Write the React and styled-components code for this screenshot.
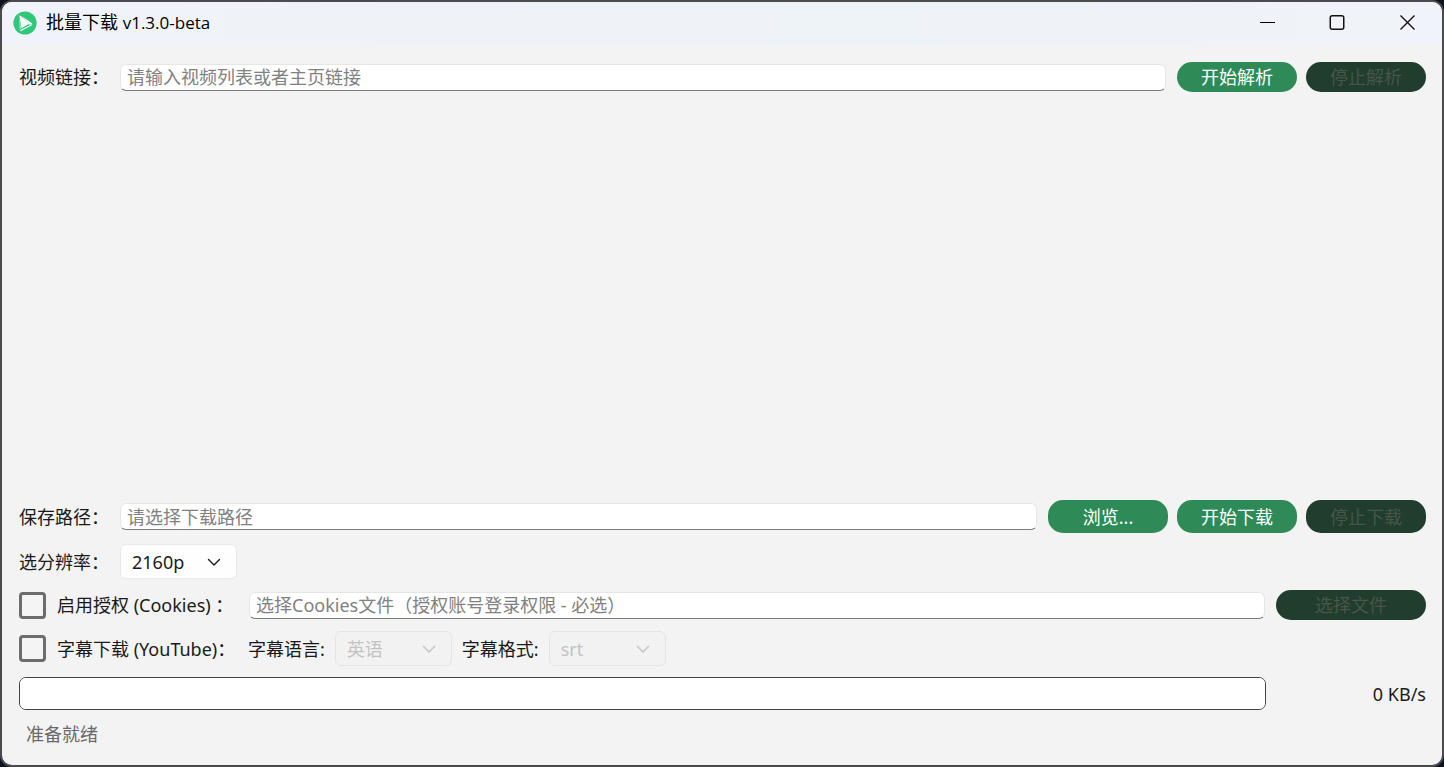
import React from "react";
import styled, { createGlobalStyle } from "styled-components";

const GlobalStyle = createGlobalStyle`
  *, *::before, *::after { box-sizing: border-box; }
  body {
    margin: 0;
    background: #0d121c;
    color: #1a1a1a;
    font: 18px/26px "Noto Sans", "Noto Sans CJK SC", sans-serif;
  }
  input, select, button { font: inherit; color: inherit; margin: 0; }
`;

const Window = styled.div`
  display: flex;
  flex-direction: column;
  min-height: 100vh;
  background: #f3f3f3;
  border: 2px solid #4b4b4e;
  border-radius: 12px;
  overflow: hidden;
`;

const TitleBar = styled.header`
  display: flex;
  align-items: center;
  height: 43px;
  padding: 0 0 2px 11px;
  background: linear-gradient(90deg, #f0f3f9, #eef3f8 60%, #f0f3f9);
`;

const Logo = styled.svg`
  width: 24px;
  height: 24px;
  margin-right: 9px;
  flex: none;
`;

const Title = styled.h1`
  flex: 1;
  margin: 0;
  font-size: 18px;
  font-weight: 400;
  color: #000;
`;

const Version = styled.span`
  font-family: "Open Sans", sans-serif;
  font-size: 17px;
`;

const CaptionButton = styled.button`
  display: grid;
  place-items: center;
  width: 70px;
  height: 41px;
  padding: 0;
  border: 0;
  background: none;
  svg { display: block; }
`;

const Content = styled.main`
  flex: 1;
  display: flex;
  flex-direction: column;
  gap: 11px;
  padding: 17px 16px 18px 17px;
`;

const Row = styled.div`
  display: flex;
  align-items: center;
  gap: 11px;
`;

const FieldLabel = styled.label`
  flex: none;
  width: 90px;
  white-space: nowrap;
`;

const TextField = styled.input`
  flex: 1;
  min-width: 0;
  height: 27px;
  padding: 0 6px;
  line-height: 24px;
  background: #fff;
  border: 1px solid #e6e6e6;
  border-bottom-color: #7c7c7c;
  border-radius: 6px;
  outline: none;
  &::placeholder { color: #818181; opacity: 1; }
`;

const ButtonGroup = styled.div`
  display: flex;
  gap: 9px;
`;

const PillButton = styled.button`
  width: ${(p) => (p.$wide ? 150 : 120)}px;
  height: ${(p) => (p.$tall ? 33 : 30)}px;
  padding: 0;
  border: 0;
  border-radius: 15px;
  background: #2e8b57;
  color: #fff;
  &:disabled { background: #203d2d; color: #475649; }
`;

const ResultArea = styled.section`
  flex: 1;
`;

const SelectBox = styled.div`
  position: relative;
  width: 117px;
  height: 35px;
  flex: none;
  color: ${(p) => (p.$disabled ? "#c3c3c3" : "#1a1a1a")};
`;

const Select = styled.select`
  appearance: none;
  width: 100%;
  height: 100%;
  padding: 0 36px 0 11px;
  background: #fefefe;
  border: 1px solid #e9e9e9;
  border-radius: 6px;
  &:disabled { background: #f2f2f2; border-color: #e5e5e5; opacity: 1; }
`;

const Chevron = styled.svg`
  position: absolute;
  right: 16px;
  top: 12px;
  width: 14px;
  height: 12px;
  pointer-events: none;
`;

const CheckLabel = styled.label`
  display: flex;
  align-items: center;
  gap: 11px;
  flex: none;
  width: 219px;
  white-space: nowrap;
`;

const Checkbox = styled.input`
  appearance: none;
  width: 27px;
  height: 27px;
  flex: none;
  border: 3px solid #6c6c6c;
  border-radius: 4px;
  background: #f4f4f4;
`;

const SubtitleOptions = styled.div`
  display: flex;
  align-items: center;
  gap: 10px;
`;

const Progress = styled.progress`
  appearance: none;
  flex: 1;
  min-width: 0;
  height: 33px;
  border: 1px solid #444;
  border-radius: 7px;
  background: #fff;
  overflow: hidden;
  &::-webkit-progress-bar { background: #fff; }
  &::-webkit-progress-value { background: #2e8b57; }
`;

const Speed = styled.output`
  width: 149px;
  text-align: right;
`;

const Status = styled.footer`
  padding-left: 7px;
  color: #6a6a6a;
`;

function Dropdown({ id, disabled, children }) {
  return (
    <SelectBox $disabled={disabled}>
      <Select id={id} disabled={disabled}>{children}</Select>
      <Chevron viewBox="0 0 14 12" fill="none" stroke="currentColor" strokeWidth="1.4" strokeLinecap="round" strokeLinejoin="round" aria-hidden="true">
        <path d="M1.5 3.5 7 9l5.500-5.500" />
      </Chevron>
    </SelectBox>
  );
}

export default function App() {
  return (
    <>
      <GlobalStyle />
      <Window lang="zh-CN">
        <TitleBar>
          <Logo viewBox="0 0 24 24" aria-hidden="true">
            <circle cx="12" cy="12" r="11.600" fill="#30c77b" />
            <path d="M6.300 4.300 9.500 6.300 15.800 13 8.600 17.200z" fill="#fff" />
            <path d="M9.500 5.800 19.400 12.500 16.700 13.900z" fill="#fff" />
            <path d="M7.200 18.900 19.500 12.900 18.600 14.500 7.600 20.200z" fill="#fff" />
            <path d="M6 4.800 6.700 18.200 8.100 17.500z" fill="#b4ecd0" />
          </Logo>
          <Title>批量下载 <Version>v1.3.0-beta</Version></Title>
          <CaptionButton aria-label="最小化">
            <svg width="17" height="17" viewBox="0 0 17 17"><path d="M1 8.500h15" stroke="#000" /></svg>
          </CaptionButton>
          <CaptionButton aria-label="最大化">
            <svg width="17" height="17" viewBox="0 0 17 17"><rect x="1.250" y="1.750" width="13.500" height="13.500" rx="2" fill="none" stroke="#111" strokeWidth="1.500" /></svg>
          </CaptionButton>
          <CaptionButton aria-label="关闭">
            <svg width="17" height="17" viewBox="0 0 17 17"><path d="M1.500 1.500l14 14M15.500 1.500l-14 14" stroke="#111" strokeWidth="1.400" /></svg>
          </CaptionButton>
        </TitleBar>
        <Content>
          <Row>
            <FieldLabel htmlFor="url">视频链接：</FieldLabel>
            <TextField id="url" placeholder="请输入视频列表或者主页链接" />
            <ButtonGroup>
              <PillButton>开始解析</PillButton>
              <PillButton disabled>停止解析</PillButton>
            </ButtonGroup>
          </Row>
          <ResultArea />
          <Row>
            <FieldLabel htmlFor="path">保存路径：</FieldLabel>
            <TextField id="path" placeholder="请选择下载路径" />
            <ButtonGroup>
              <PillButton $tall>浏览...</PillButton>
              <PillButton $tall>开始下载</PillButton>
              <PillButton $tall disabled>停止下载</PillButton>
            </ButtonGroup>
          </Row>
          <Row>
            <FieldLabel htmlFor="resolution">选分辨率：</FieldLabel>
            <Dropdown id="resolution"><option>2160p</option></Dropdown>
          </Row>
          <Row>
            <CheckLabel><Checkbox type="checkbox" />启用授权 (Cookies) ：</CheckLabel>
            <TextField aria-label="Cookies文件" placeholder="选择Cookies文件（授权账号登录权限 - 必选）" />
            <PillButton $wide disabled>选择文件</PillButton>
          </Row>
          <SubtitleOptions>
            <CheckLabel><Checkbox type="checkbox" />字幕下载 (YouTube)：</CheckLabel>
            <label htmlFor="language">字幕语言:</label>
            <Dropdown id="language" disabled><option>英语</option></Dropdown>
            <label htmlFor="format">字幕格式:</label>
            <Dropdown id="format" disabled><option>srt</option></Dropdown>
          </SubtitleOptions>
          <Row>
            <Progress value={0} max={100} aria-label="下载进度" />
            <Speed>0 KB/s</Speed>
          </Row>
          <Status>准备就绪</Status>
        </Content>
      </Window>
    </>
  );
}
